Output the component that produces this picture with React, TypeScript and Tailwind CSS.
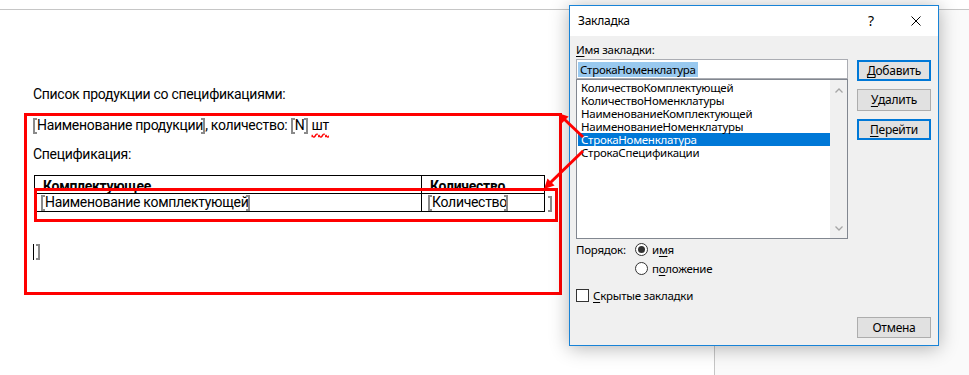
import type { ReactNode } from "react";

const BOOKMARKS = [
    "КоличествоКомплектующей",
    "КоличествоНоменклатуры",
    "НаименованиеКомплектующей",
    "НаименованиеНоменклатуры",
    "СтрокаНоменклатура",
    "СтрокаСпецификации",
];
const SELECTED = "СтрокаНоменклатура";

// word bookmark brackets
function Bracket({ right = false, className = "" }: { right?: boolean; className?: string }) {
    return (
        <span
            className={`inline-block w-[4px] h-[16px] align-[-4px] border-y-2 border-[#8a8a8a] ${right ? "border-r-2" : "border-l-2"} ${className}`}
        />
    );
}

function Caret() {
    return <span className="inline-block w-px h-[16px] bg-black align-[-4px] mr-[2px]" />;
}

function Acc({ children }: { children: ReactNode }) {
    return <span className="underline underline-offset-[2px]">{children}</span>;
}

function DlgButton({ children, primary = false, className = "" }: { children: ReactNode; primary?: boolean; className?: string }) {
    return (
        <button
            className={`w-[74px] h-[21px] bg-[#e1e1e1] flex items-center justify-center text-black ${primary ? "border-2 border-[#0078d7]" : "border border-[#adadad]"} ${className}`}
        >
            {children}
        </button>
    );
}

function Radio({ checked }: { checked: boolean }) {
    return (
        <span className="w-[13px] h-[13px] rounded-full border border-[#333333] bg-white flex items-center justify-center shrink-0">
            {checked && <span className="w-[7px] h-[7px] rounded-full bg-[#333333]" />}
        </span>
    );
}

export default function App() {
    return (
        <div className="relative w-[969px] h-[375px] overflow-hidden bg-white">
            <div className="flex flex-col h-full">
                <div className="h-[10px] shrink-0 border-b border-[#c6c6c6]" />
                <div className="flex flex-1">

                    {/* ── DOCUMENT PAGE ── */}
                    <div className="w-[715px] border-r border-[#c6c6c6] pl-[24px] font-['Roboto','Liberation_Sans',sans-serif] text-[14px] tracking-[-0.3px] leading-[18px] text-black">
                        <p className="pl-[9px] pt-[75px]">Список продукции со спецификациями:</p>

                        <div className="mt-[10px] w-[538px] h-[182px] border-[3px] border-[#ff0000] pl-[6px]">
                            <p className="h-[18px]">
                                <Bracket />Наименование продукции<Bracket right className="-ml-[2px]" />, количество: <Bracket />N<Bracket right />{" "}
                                <span className="underline decoration-wavy decoration-[#ff0000] underline-offset-[3px]">шт</span>
                            </p>
                            <p className="mt-[11px]">Спецификация:</p>

                            <div className="relative mt-[12px] ml-[1px] w-[511px]">
                                <div className="border border-black">
                                    <div className="flex h-[18px] border-b border-black font-bold leading-[17px] pt-[2px]">
                                        <div className="w-[387px] border-r border-black pl-[8px] -mt-[2px] pt-[2px]">Комплектующее</div>
                                        <div className="flex-1 pl-[8px]">Количество</div>
                                    </div>
                                    <div className="flex h-[17px] leading-[17px]">
                                        <div className="w-[387px] border-r border-black pl-[6px]">
                                            <Bracket />Наименование комплектующей<Bracket right className="-ml-[2px]" />
                                        </div>
                                        <div className="flex-1 pl-[6px]">
                                            <Bracket />Количество<Bracket right className="-ml-[3px]" />
                                        </div>
                                    </div>
                                </div>
                                <span className="absolute left-[514px] top-[20px] leading-[17px]">
                                    <Bracket right />
                                </span>
                                <div className="absolute left-0 top-[13px] w-[524px] h-[34px] border-[3px] border-[#ff0000]" />
                            </div>

                            <p className="mt-[30px] h-[18px]">
                                <Caret /><Bracket right />
                            </p>
                        </div>
                    </div>

                    <div className="flex-1 bg-[#fafafa]" />
                </div>
            </div>

            {/* ── BOOKMARK DIALOG ── */}
            <div className="absolute left-[569px] top-[5px] w-[370px] h-[341px] flex flex-col border border-[#1883d7] bg-[#f0f0f0] shadow-[0_2px_18px_rgba(0,0,0,0.3)] font-['Noto_Sans',sans-serif] text-[11.5px] tracking-[-0.25px] leading-[16px] text-black">
                <div className="h-[30px] shrink-0 bg-white flex items-center pl-[8px]">
                    <span className="text-[12px]">Закладка</span>
                    <span className="ml-auto w-[12px] text-center text-[14px]">?</span>
                    <svg className="ml-[34px] mr-[17px]" width="10" height="10" viewBox="0 0 10 10">
                        <path d="M0.5 0.5L9.5 9.5M9.5 0.5L0.5 9.5" stroke="#000" strokeWidth="1" />
                    </svg>
                </div>

                <div className="flex flex-1 pl-[6px] pt-[6px] pb-[7px]">
                    <div className="w-[272px] flex flex-col">
                        <p><Acc>И</Acc>мя закладки:</p>
                        <div className="mt-[1px] h-[20px] border border-[#abadb3] bg-white flex items-center pl-[1px]">
                            <span className="bg-[#99c9ef] px-[2px] leading-[15px]">{SELECTED}</span>
                        </div>
                        <div className="h-[160px] border border-[#828790] bg-white flex">
                            <div className="flex-1 pt-[1px]">
                                {BOOKMARKS.map((b) => (
                                    <div
                                        key={b}
                                        className={`ml-[1px] h-[13px] leading-[13px] pl-[3px] ${b === SELECTED ? "bg-[#0078d7] text-white" : ""}`}
                                    >
                                        {b}
                                    </div>
                                ))}
                            </div>
                            <div className="w-[17px] bg-[#f0f0f0] flex flex-col items-center justify-between pt-[8px] pb-[7px]">
                                <svg width="8" height="5" viewBox="0 0 8 5">
                                    <path d="M0.5 4.5L4 1L7.5 4.5" fill="none" stroke="#a6a6a6" strokeWidth="1.3" />
                                </svg>
                                <svg width="8" height="5" viewBox="0 0 8 5">
                                    <path d="M0.5 0.5L4 4L7.5 0.5" fill="none" stroke="#a6a6a6" strokeWidth="1.3" />
                                </svg>
                            </div>
                        </div>

                        <div className="mt-[1px] h-[19px] flex items-center">
                            <span className="w-[59px]">Порядок:</span>
                            <Radio checked />
                            <span className="ml-[4px]">и<Acc>м</Acc>я</span>
                        </div>
                        <div className="h-[19px] flex items-center pl-[59px]">
                            <Radio checked={false} />
                            <span className="ml-[4px]">п<Acc>о</Acc>ложение</span>
                        </div>
                        <div className="mt-[8px] h-[19px] flex items-center">
                            <span className="w-[13px] h-[13px] border border-[#333333] bg-white shrink-0" />
                            <span className="ml-[4px]"><Acc>С</Acc>крытые закладки</span>
                        </div>
                    </div>

                    <div className="ml-[9px] w-[74px] flex flex-col text-[12px]">
                        <DlgButton primary className="mt-[18px]"><Acc>Д</Acc>обавить</DlgButton>
                        <DlgButton className="mt-[8px] h-[22px]"><Acc>У</Acc>далить</DlgButton>
                        <DlgButton primary className="mt-[8px]"><Acc>П</Acc>ерейти</DlgButton>
                        <DlgButton className="mt-auto">Отмена</DlgButton>
                    </div>
                </div>
            </div>

            {/* ── ANNOTATION ARROWS ── */}
            <svg className="absolute inset-0 pointer-events-none" width="969" height="375" viewBox="0 0 969 375">
                <line x1="583" y1="137" x2="563" y2="118" stroke="#ff0000" strokeWidth="3" />
                <polygon points="558,113 568.6,116.6 561.6,123.6" fill="#ff0000" />
                <line x1="583" y1="151" x2="550" y2="183" stroke="#ff0000" strokeWidth="3" />
                <polygon points="544,189 554.6,185.4 547.5,178.4" fill="#ff0000" />
            </svg>
        </div>
    );
}
